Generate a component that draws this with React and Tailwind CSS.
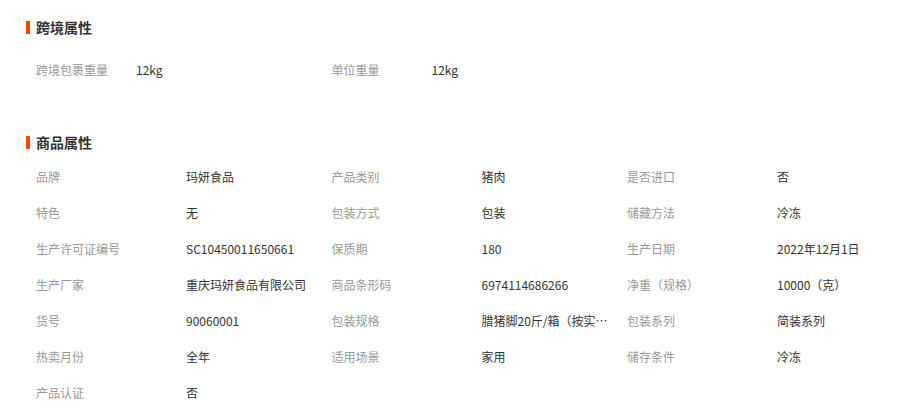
const crossBorder = [
  ["跨境包裹重量", "12kg"],
  ["单位重量", "12kg"],
];

const productAttrs = [
  ["品牌", "玛妍食品"],
  ["产品类别", "猪肉"],
  ["是否进口", "否"],
  ["特色", "无"],
  ["包装方式", "包装"],
  ["储藏方法", "冷冻"],
  ["生产许可证编号", "SC10450011650661"],
  ["保质期", "180"],
  ["生产日期", "2022年12月1日"],
  ["生产厂家", "重庆玛妍食品有限公司"],
  ["商品条形码", "6974114686266"],
  ["净重（规格）", "10000（克）"],
  ["货号", "90060001"],
  ["包装规格", "腊猪脚20斤/箱（按实际重量计算）"],
  ["包装系列", "简装系列"],
  ["热卖月份", "全年"],
  ["适用场景", "家用"],
  ["储存条件", "冷冻"],
  ["产品认证", "否"],
];

function Title({ children }) {
  return (
    <div className="flex items-center h-5 pl-[26px]">
      <span className="w-[4px] h-[13px] bg-[#ff4400] mr-[6px]" />
      <span className="text-[14px] font-bold text-[#333]">{children}</span>
    </div>
  );
}

export default function App() {
  return (
    <div
      className="w-[919px] h-[415px] bg-white overflow-hidden"
      style={{ fontFamily: '"Microsoft YaHei", "Noto Sans CJK SC", sans-serif' }}
    >
      <div className="pt-[17px]">
        <Title>跨境属性</Title>
        <div className="flex pl-[36px] mt-[15px]">
          {crossBorder.map(([label, value]) => (
            <div key={label} className="w-[295.5px] h-9 flex items-center text-[12px]">
              <span className="w-[100px] text-[#999]">{label}</span>
              <span className="text-[#333]">{value}</span>
            </div>
          ))}
        </div>
      </div>

      <div className="mt-[44px]">
        <Title>商品属性</Title>
        <div className="grid grid-cols-[295.5px_295.5px_295.5px] pl-[36px] mt-[7px]">
          {productAttrs.map(([label, value]) => (
            <div key={label} className="h-9 flex items-center text-[12px]">
              <span className="w-[150px] shrink-0 text-[#999]">{label}</span>
              <span className="w-[128px] text-[#333] whitespace-nowrap overflow-hidden text-ellipsis">
                {value}
              </span>
            </div>
          ))}
        </div>
      </div>
    </div>
  );
}
